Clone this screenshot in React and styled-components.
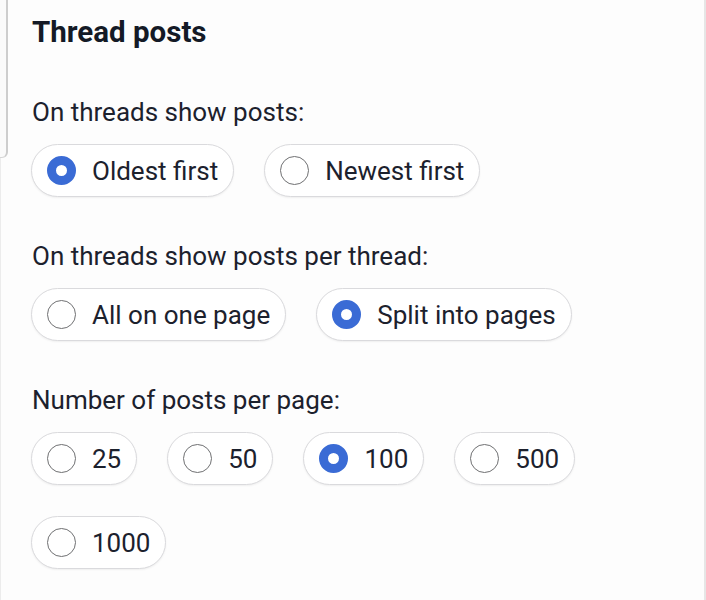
import React, { useState } from 'react';
import styled, { createGlobalStyle } from 'styled-components';

const sections = [
  {
    name: 'order',
    label: 'On threads show posts:',
    options: ['Oldest first', 'Newest first'],
    initial: 'Oldest first',
  },
  {
    name: 'paging',
    label: 'On threads show posts per thread:',
    options: ['All on one page', 'Split into pages'],
    initial: 'Split into pages',
  },
  {
    name: 'perPage',
    label: 'Number of posts per page:',
    options: ['25', '50', '100', '500', '1000'],
    initial: '100',
  },
];

function App() {
  const [values, setValues] = useState(
    Object.fromEntries(sections.map((s) => [s.name, s.initial]))
  );

  return (
    <>
      <GlobalStyle />
      <Card>
        <EdgeTab />
        <Title>Thread posts</Title>
        {sections.map((section) => (
          <Section key={section.name}>
            <Label>{section.label}</Label>
            <Options>
              {section.options.map((option) => {
                const checked = values[section.name] === option;
                return (
                  <Pill key={option}>
                    <HiddenInput
                      type="radio"
                      name={section.name}
                      checked={checked}
                      onChange={() => setValues({ ...values, [section.name]: option })}
                    />
                    <Radio $checked={checked} />
                    <PillText>{option}</PillText>
                  </Pill>
                );
              })}
            </Options>
          </Section>
        ))}
      </Card>
    </>
  );
}

const GlobalStyle = createGlobalStyle`
  body {
    margin: 0;
    background: #ffffff;
    font-family: Roboto, "Noto Sans", "Liberation Sans", sans-serif;
    color: #1c212d;
  }
`;

const Card = styled.div`
  position: relative;
  box-sizing: border-box;
  width: 706px;
  min-height: 600px;
  padding: 14px 24px 40px 30px;
  background: #fdfdfd;
  border-left: 1px solid #ececec;
  border-right: 2px solid #e6e6e6;
`;

const EdgeTab = styled.div`
  position: absolute;
  top: 0;
  left: -1px;
  width: 6px;
  height: 157px;
  background: #fafafa;
  border-right: 2px solid #cdcdcd;
  border-bottom: 1px solid #d6d6d6;
  border-bottom-right-radius: 6px;
`;

const Title = styled.h2`
  margin: 0 0 46px 1px;
  font-size: 29.5px;
  line-height: 36px;
  font-weight: 700;
  color: #141a26;
`;

const Section = styled.section`
  & + & {
    margin-top: 43px;
  }
`;

const Label = styled.p`
  margin: 0 0 16px 1px;
  font-size: 26px;
  line-height: 32px;
  font-weight: 400;
`;

const Options = styled.div`
  display: flex;
  flex-wrap: wrap;
  gap: 31px 30px;
`;

const Pill = styled.label`
  display: inline-flex;
  align-items: center;
  gap: 16px;
  box-sizing: border-box;
  height: 53px;
  padding: 0 15px 0 15px;
  background: #ffffff;
  border: 1px solid #dadadd;
  border-radius: 27px;
  box-shadow: 0 1px 2px rgba(0, 0, 0, 0.06);
  cursor: pointer;
`;

const HiddenInput = styled.input`
  position: absolute;
  opacity: 0;
  width: 0;
  height: 0;
  margin: 0;
`;

const Radio = styled.span`
  box-sizing: border-box;
  flex: none;
  width: 29px;
  height: 29px;
  border-radius: 50%;
  background: #ffffff;
  border: ${(p) => (p.$checked ? '9.5px solid #3a6bd5' : '1.5px solid #6f7072')};
`;

const PillText = styled.span`
  font-size: 26px;
  line-height: 30px;
  color: #1c212d;
`;

export default App;
